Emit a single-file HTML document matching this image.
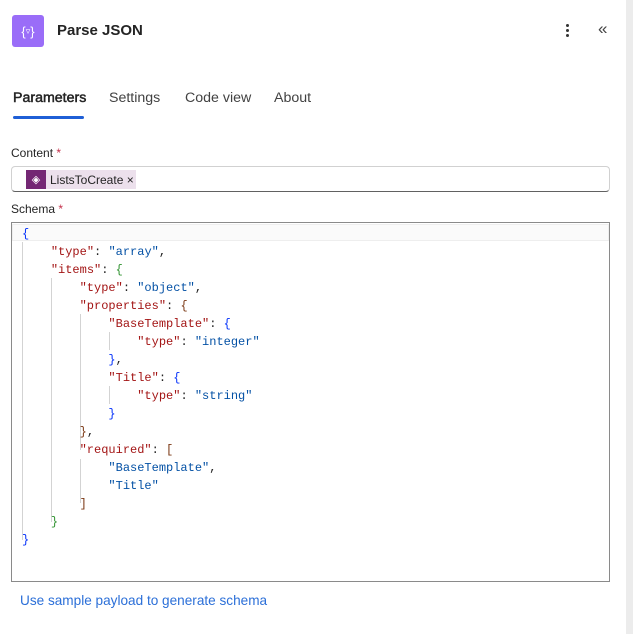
<!DOCTYPE html>
<html><head><meta charset="utf-8"><style>
*{margin:0;padding:0;box-sizing:border-box}
body{width:633px;height:634px;background:#fff;font-family:"Liberation Sans",sans-serif;position:relative;overflow:hidden;color:#242424}
.abs{position:absolute}
.strip{right:0;top:0;width:7px;height:634px;background:#ececec}
.icon{left:12px;top:15px;width:32px;height:32px;background:#9a6df8;border-radius:3px;color:#fff;font-size:13px;display:flex;align-items:center;justify-content:center}
.title{left:57px;top:22px;font-size:15px;font-weight:bold;color:#242424}
.tab{top:90px;font-size:14.2px;color:#424242}
.code{font-family:"Liberation Mono",monospace;font-size:12px;line-height:18px;white-space:pre;left:22px;top:225px}
.k{color:#a31515}.s{color:#0451a5}.b1{color:#0431fa}.b2{color:#319331}.b3{color:#7b3814}
.g{position:absolute;width:1px;background:#d3d3d3}
</style></head><body>
<div class="abs strip"></div>
<div class="abs icon">{<span style="font-size:9px">▿</span>}</div>
<div class="abs title">Parse JSON</div>
<div class="abs" style="left:566px;top:24px;width:4px">
 <div style="width:3px;height:3px;background:#333;border-radius:50%;margin-bottom:2px"></div>
 <div style="width:3px;height:3px;background:#333;border-radius:50%;margin-bottom:2px"></div>
 <div style="width:3px;height:3px;background:#333;border-radius:50%"></div></div>
<div class="abs" style="left:598px;top:19px;font-size:17px;color:#444">«</div>
<div class="abs tab" style="left:13px;color:#242424;-webkit-text-stroke:0.5px #242424">Parameters</div>
<div class="abs" style="left:13px;top:116px;width:71px;height:3px;background:#1f5fd6;border-radius:2px"></div>
<div class="abs tab" style="left:109px">Settings</div>
<div class="abs tab" style="left:185px">Code view</div>
<div class="abs tab" style="left:274px">About</div>
<div class="abs" style="left:11px;top:146px;font-size:12px">Content <span style="color:#c4314b">*</span></div>
<div class="abs" style="left:11px;top:166px;width:599px;height:26px;border:1px solid #d1d1d1;border-bottom-color:#616161;border-radius:4px"></div>
<div class="abs" style="left:26px;top:170px;height:19px;width:110px;background:#ece0ec;display:flex;align-items:center;font-size:12px">
 <div style="width:20px;height:19px;background:#742774;color:#fff;font-size:11px;display:flex;align-items:center;justify-content:center;margin-right:4px">◈</div>ListsToCreate ×</div>
<div class="abs" style="left:11px;top:202px;font-size:12px">Schema <span style="color:#c4314b">*</span></div>
<div class="abs" style="left:11px;top:222px;width:599px;height:360px;border:1px solid #8a8a8a"></div>
<div class="abs" style="left:12px;top:224px;width:597px;height:17px;background:#fafafa;border:1px solid #eee"></div>
<div class="g" style="left:22px;top:242px;height:298px"></div>
<div class="g" style="left:51px;top:278px;height:244px"></div>
<div class="g" style="left:80px;top:314px;height:136px"></div>
<div class="g" style="left:80px;top:459px;height:44px"></div>
<div class="g" style="left:109px;top:332px;height:18px"></div>
<div class="g" style="left:109px;top:386px;height:18px"></div>
<div class="abs code"><span class="b1">{</span>
    <span class="k">"type"</span>: <span class="s">"array"</span>,
    <span class="k">"items"</span>: <span class="b2">{</span>
        <span class="k">"type"</span>: <span class="s">"object"</span>,
        <span class="k">"properties"</span>: <span class="b3">{</span>
            <span class="k">"BaseTemplate"</span>: <span class="b1">{</span>
                <span class="k">"type"</span>: <span class="s">"integer"</span>
            <span class="b1">}</span>,
            <span class="k">"Title"</span>: <span class="b1">{</span>
                <span class="k">"type"</span>: <span class="s">"string"</span>
            <span class="b1">}</span>
        <span class="b3">}</span>,
        <span class="k">"required"</span>: <span class="b3">[</span>
            <span class="s">"BaseTemplate"</span>,
            <span class="s">"Title"</span>
        <span class="b3">]</span>
    <span class="b2">}</span>
<span class="b1">}</span></div>
<div class="abs" style="left:20px;top:593px;font-size:13.6px;color:#2b6fd8">Use sample payload to generate schema</div>
</body></html>
